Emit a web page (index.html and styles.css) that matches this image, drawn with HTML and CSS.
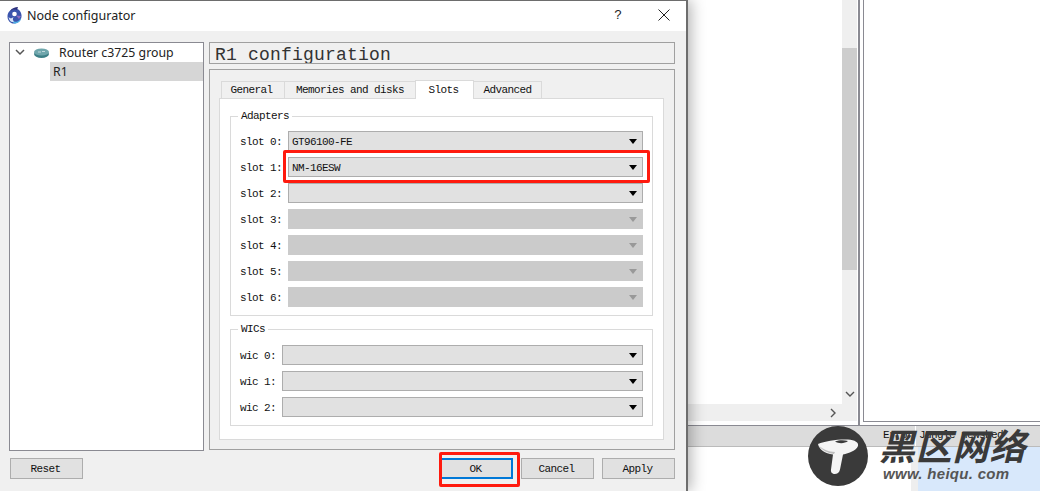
FILE: index.html
```html
<!DOCTYPE html>
<html lang="en">
<head>
<meta charset="utf-8">
<title>Node configurator</title>
<link rel="stylesheet" href="styles.css">
</head>
<body>
<div class="desktop">
  <div class="bg-scroll-v"><div class="bg-thumb"></div><svg class="bg-arrow" width="10" height="8" viewBox="0 0 10 8"><path d="M1 2l4 4 4-4" fill="none" stroke="#555" stroke-width="1.4"/></svg></div>
  <div class="bg-scroll-h"><svg width="8" height="10" viewBox="0 0 8 10"><path d="M2 1l4 4-4 4" fill="none" stroke="#555" stroke-width="1.4"/></svg></div>
  <div class="bg-line-a"></div>
  <div class="bg-pane-right"></div>
  <div class="bg-strip"><span class="bg-divider"></span><span class="bg-status">Error Jungle newsbed</span></div>
  <div class="bg-blue"></div>

  <section class="window">
    <header class="titlebar">
      <svg class="app-icon" width="15" height="18" viewBox="0 0 15 18">
        <path d="M7 3c4-1 7 2 7.500 6 .5 5-3 8-7 8.500-4 .5-7-3-7-7C.5 6.500 3 3.500 7 3z" fill="#3b55ad"/>
        <path d="M3 5c2-3 5-4 8-4l-1 3c-3-1-5 0-7 1z" fill="#2c2f7a"/>
        <circle cx="7.500" cy="8" r="2.300" fill="#fff"/>
        <path d="M1.500 11c2 2 3 1.500 5 0-1 2.500-1 3.500 1 4.500-3 1.500-5 0-6-4.500z" fill="#d9e4f7"/>
        <path d="M6 15.500c3 1 6 0 8-3.500 0 3-3 5.500-6.500 5.500-1 0-1.500-1-1.500-2z" fill="#4fb3e8"/>
        <path d="M9 9.500l5 .5-2 3z" fill="#8d6fc4"/>
      </svg>
      <span class="title-text">Node configurator</span>
      <span class="help">?</span>
      <svg class="close" width="12" height="12" viewBox="0 0 12 12"><path d="M.5.5l11 11M11.500.5l-11 11" stroke="#222" stroke-width="1"/></svg>
    </header>
    <div class="body">
      <div class="main">
        <aside class="tree">
          <div class="tree-group">
            <svg class="chev" width="10" height="7" viewBox="0 0 10 7"><path d="M1 1l4 4 4-4" fill="none" stroke="#555" stroke-width="1.500"/></svg>
            <svg class="router" width="15" height="10" viewBox="0 0 15 10">
              <ellipse cx="7.500" cy="6" rx="7.500" ry="4" fill="#3d7f86"/>
              <ellipse cx="7.500" cy="4" rx="7.500" ry="3.600" fill="#6fa6ac"/>
              <path d="M4 4h3M8 3.500h3" stroke="#d5e6e8" stroke-width=".8"/>
            </svg>
            <span>Router c3725 group</span>
          </div>
          <div class="tree-item">R1</div>
        </aside>
        <div class="content">
          <h1 class="config-title">R1 configuration</h1>
          <div class="panel">
            <nav class="tabs">
              <span class="tab tab-general">General</span>
              <span class="tab tab-memory">Memories and disks</span>
              <span class="tab tab-active">Slots</span>
              <span class="tab tab-advanced">Advanced</span>
            </nav>
            <div class="pane">
              <fieldset class="group group-adapters">
                <legend>Adapters</legend>
                <div class="row"><label>slot 0:</label><div class="combo"><span>GT96100-FE</span><i class="arrow"></i></div></div>
                <div class="row"><label>slot 1:</label><div class="combo"><span>NM-16ESW</span><i class="arrow"></i></div></div>
                <div class="row"><label>slot 2:</label><div class="combo"><span></span><i class="arrow"></i></div></div>
                <div class="row"><label>slot 3:</label><div class="combo off"><span></span><i class="arrow"></i></div></div>
                <div class="row"><label>slot 4:</label><div class="combo off"><span></span><i class="arrow"></i></div></div>
                <div class="row"><label>slot 5:</label><div class="combo off"><span></span><i class="arrow"></i></div></div>
                <div class="row"><label>slot 6:</label><div class="combo off"><span></span><i class="arrow"></i></div></div>
              </fieldset>
              <fieldset class="group group-wics">
                <legend>WICs</legend>
                <div class="row"><label>wic 0:</label><div class="combo"><span></span><i class="arrow"></i></div></div>
                <div class="row"><label>wic 1:</label><div class="combo"><span></span><i class="arrow"></i></div></div>
                <div class="row"><label>wic 2:</label><div class="combo"><span></span><i class="arrow"></i></div></div>
              </fieldset>
            </div>
          </div>
        </div>
      </div>
      <footer class="buttons">
        <button class="btn">Reset</button>
        <span class="spacer"></span>
        <button class="btn btn-ok">OK</button>
        <button class="btn">Cancel</button>
        <button class="btn">Apply</button>
      </footer>
    </div>
  </section>

  <div class="mark mark-slot"></div>
  <div class="mark mark-ok"></div>

  <div class="watermark">
    <svg class="wm-logo" width="60" height="60" viewBox="0 0 60 60">
      <circle cx="30" cy="30" r="30" fill="#3a3a3a"/>
      <path d="M10 18c7-3 20-5 30-4.500 7 .5 11 3 10 6.500-2 5-9 7-15 8.500l-3 15c-1 6-10 6-9 0l2-15c-8-1-14-5-15-10.500z" fill="#f4f4f4"/>
      <path d="M11 20c3 4 8 7 15 8l1-2c-6 0-12-3-16-6z" fill="#bdbdbd"/>
      <path d="M27 15.500c4-1.500 9-1.500 13-.5-3 2.500-9 3-13 .5z" fill="#3a3a3a"/>
    </svg>
    <div class="wm-text">
      <div class="wm-cn">黑区网络</div>
      <div class="wm-en">www. heiqu. com</div>
    </div>
  </div>
</div>
</body>
</html>
```
FILE: styles.css
```css
* { box-sizing: border-box; }
html, body { margin: 0; padding: 0; background: #fff; }
.desktop { position: relative; width: 1040px; height: 491px; overflow: hidden; background: #fff; }

.bg-scroll-v { position: absolute; left: 842px; top: 0; width: 15px; height: 404px; background: #efefef; }
.bg-thumb { position: absolute; left: 0; top: 48px; width: 15px; height: 222px; background: #cdcdcd; }
.bg-arrow { position: absolute; left: 3px; top: 390px; }
.bg-scroll-h { position: absolute; left: 688px; top: 404px; width: 169px; height: 17px; background: #efefef; display: flex; justify-content: flex-end; align-items: center; padding-right: 20px; }
.bg-line-a { position: absolute; left: 858px; top: 0; width: 2px; height: 425px; background: #8a8a92; }
.bg-pane-right { position: absolute; left: 863px; top: -2px; width: 180px; height: 424px; border: 1px solid #8a8a92; background: #fff; }
.bg-strip { position: absolute; left: 688px; top: 425px; width: 352px; height: 22px; background: #dcdcdc; border-top: 1px solid #8a8a92; border-bottom: 1px solid #bbb; }
.bg-divider { position: absolute; left: 227px; top: 0; width: 1px; height: 20px; background: #fff; }
.bg-status { position: absolute; left: 195px; top: 3px; font: 11px "Liberation Mono", monospace; letter-spacing: -.6px; color: #111; white-space: nowrap; }
.bg-blue { position: absolute; left: 911px; top: 447px; width: 129px; height: 44px; background: #d8e8fb; border-left: 6px solid #eeeeee; box-shadow: inset 1px 0 0 #eee; }

.window {
  position: absolute; left: -1px; top: 0; width: 689px; height: 491px;
  background: #f0f0f0; border: 1px solid #6d6d6d; border-bottom: 0;
  border-width: 1px 2px 0 1px;
  box-shadow: 3px 0 14px rgba(0,0,0,.3);
  display: flex; flex-direction: column;
}
.titlebar { height: 30px; background: #fff; display: flex; align-items: center; padding: 0 16px 2px 7px; font: 12px "Noto Sans", sans-serif; color: #222; flex: none; }
.app-icon { margin-right: 5px; }
.title-text { flex: 1; font-size: 12.5px; }
.help { font: 13px "Liberation Mono", monospace; margin-right: 36px; }

.body { flex: 1; padding: 11px 11px 12px 9px; display: flex; flex-direction: column; min-height: 0; }
.main { display: flex; gap: 5px; height: 409px; flex: none; }

.tree { width: 195px; background: #fff; border: 1px solid #8a8a92; font: 12.3px "Noto Sans", sans-serif; color: #222; flex: none; }
.tree-group { height: 19px; display: flex; align-items: center; padding-left: 5px; }
.chev { margin-right: 9px; }
.router { margin-right: 10px; }
.tree-item { margin-left: 40px; height: 19px; background: #d6d6d6; padding-left: 3px; line-height: 19px; }

.content { flex: 1; display: flex; flex-direction: column; gap: 5px; min-width: 0; }
.config-title { margin: 0; height: 22px; border: 1px solid #a0a0a0; font: 400 18px/25px "Liberation Mono", monospace; letter-spacing: .2px; padding-left: 5px; color: #333; flex: none; overflow: hidden; }
.panel { height: 381px; border: 1px solid #a0a0a0; padding: 10px 10px 9px 9px; display: flex; flex-direction: column; flex: none; font: 11px "Liberation Mono", monospace; letter-spacing: -.6px; color: #111; }

.tabs { display: flex; height: 18px; padding-left: 2px; align-items: flex-end; flex: none; position: relative; z-index: 1; }
.tab { height: 17px; background: #f0f0f0; border: 1px solid #dadada; border-bottom: 0; display: flex; align-items: center; justify-content: center; margin-left: -1px; }
.tab:first-child { margin-left: 0; }
.tab-general { width: 64px; padding-right: 3px; }
.tab-memory { width: 132px; }
.tab-active { width: 59px; height: 19px; background: #fff; margin-bottom: -1px; position: relative; padding-right: 2px; }
.tab-advanced { width: 69px; }

.pane { flex: 1; background: #fff; border: 1px solid #dadada; padding: 10px 10px 12px 10px; display: flex; flex-direction: column; gap: 6px; }
.group { margin: 0; padding: 0 9px 0 9px; border: 1px solid #dadada; min-width: 0; display: flex; flex-direction: column; gap: 6px; }
.group legend { padding: 0 3px; margin-left: -2px; line-height: 14px; height: 14px; }
.group-adapters { height: 207px; padding-top: 8px; }
.group-wics { height: 104px; padding-top: 9px; }
.row { display: flex; align-items: center; height: 20px; }
.row label { white-space: nowrap; padding-top: 2px; }
.group-adapters .row label { width: 48px; }
.group-wics .row label { width: 42px; }

.combo { flex: 1; height: 20px; background: #e1e1e1; border: 1px solid #adadad; display: flex; align-items: center; justify-content: space-between; padding: 0 5px 0 3px; }
.combo span { padding-top: 1px; }
.combo.off { background: #cbcbcb; border-color: #cbcbcb; }
.arrow { width: 0; height: 0; border: 4px solid transparent; border-top: 5px solid #000; border-bottom: 0; }
.off .arrow { border-top-color: #999; }

.buttons { display: flex; align-items: center; gap: 8px; margin-top: 7px; height: 21px; padding-left: 1px; flex: none; }
.spacer { flex: 1; }
.btn { width: 73px; height: 21px; background: #e1e1e1; border: 1px solid #adadad; padding: 0 2px 0 0; font: 11px "Liberation Mono", monospace; letter-spacing: -.6px; color: #111; }
.btn-ok { border: 2px solid #0078d7; }

.mark { position: absolute; border: 3px solid #ff1a0e; border-radius: 2px; }
.mark-slot { left: 283px; top: 150px; width: 367px; height: 33px; }
.mark-ok { left: 439px; top: 452px; width: 81px; height: 35px; }

.watermark { position: absolute; left: 808px; top: 426px; display: flex; gap: 11px; align-items: flex-start; }
.wm-text { display: flex; flex-direction: column; align-items: flex-start; margin-top: -3px; }
.wm-cn { font: italic 700 36px/42px "Noto Sans CJK SC", sans-serif; color: #3a3a3a; white-space: nowrap; letter-spacing: .8px; }
.wm-en { font: italic 700 15px/16px "Liberation Sans", sans-serif; color: #555; letter-spacing: .3px; white-space: nowrap; margin-top: 1px; margin-left: 4px; }
```
